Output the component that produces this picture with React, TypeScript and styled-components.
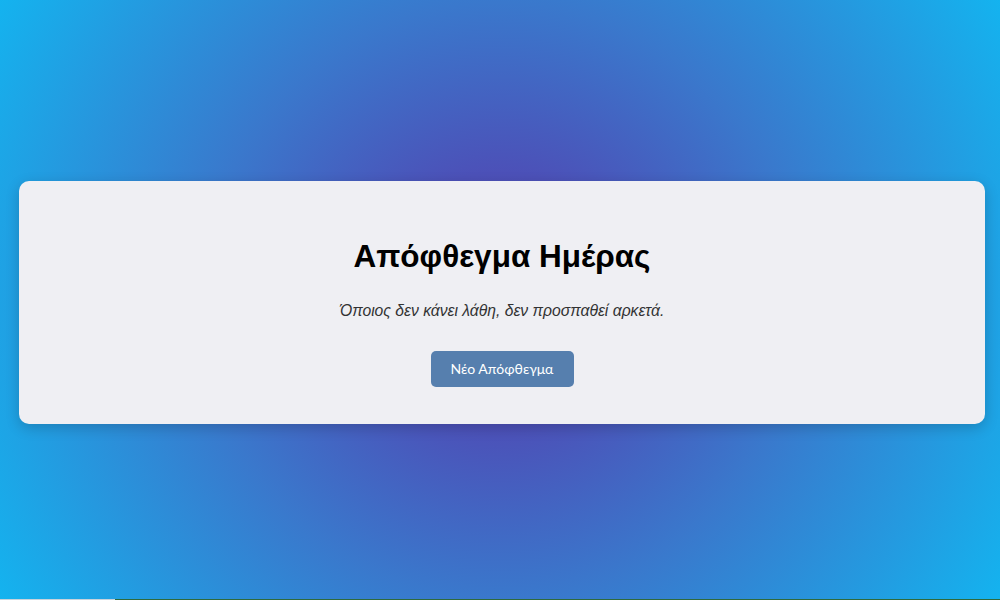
import React from "react";
import styled, { createGlobalStyle } from "styled-components";

const Global = createGlobalStyle`
  html, body { margin: 0; padding: 0; }
  body {
    font-family: "Liberation Sans", Arial, sans-serif;
    overflow: hidden;
  }
`;

const Page = styled.div`
  width: 1000px;
  height: 600px;
  display: flex;
  flex-direction: column;
  background: radial-gradient(
    circle farthest-corner at 50% 50%,
    #5546b6 0%,
    #4c51b8 22%,
    #3a78cc 51%,
    #1da5e6 88%,
    #14b3ef 100%
  );
`;

const Stage = styled.div`
  flex: 1;
  display: flex;
  align-items: center;
  padding: 5px 15px 0 19px;
`;

const Card = styled.div`
  flex: 1;
  background: #efeff3;
  border-radius: 10px;
  box-shadow: 0 4px 14px rgba(0, 0, 0, 0.18);
  padding: 57px 20px 37px;
  display: flex;
  flex-direction: column;
  align-items: center;
  text-align: center;
`;

const Title = styled.h1`
  margin: 0 0 27px;
  font-family: "Liberation Sans", Arial, sans-serif;
  font-size: 31.5px;
  font-weight: 700;
  color: #000;
  line-height: 37px;
`;

const Quote = styled.p`
  margin: 0 0 31px;
  font-family: "Liberation Sans", Arial, sans-serif;
  font-style: italic;
  font-size: 15.7px;
  color: #333;
  line-height: 18px;
`;

const Button = styled.button`
  width: 143px;
  height: 36px;
  border: none;
  border-radius: 5px;
  background: #567fae;
  color: #fff;
  font-family: Lato, "Open Sans", sans-serif;
  font-size: 14px;
  cursor: pointer;
  padding: 0;
`;

const Strip = styled.div`
  height: 1px;
  display: flex;
`;

const StripPart = styled.div<{ $w?: number; $c: string }>`
  ${(p) => (p.$w ? `width: ${p.$w}px;` : "flex: 1;")}
  background: ${(p) => p.$c};
`;

export default function App() {
  return (
    <>
      <Global />
      <Page>
        <Stage>
          <Card>
            <Title>Απόφθεγμα Ημέρας</Title>
            <Quote>Όποιος δεν κάνει λάθη, δεν προσπαθεί αρκετά.</Quote>
            <Button>Νέο Απόφθεγμα</Button>
          </Card>
        </Stage>
        <Strip>
          <StripPart $w={115} $c="#c9d3dc" />
          <StripPart $c="#2f6a3c" />
        </Strip>
      </Page>
    </>
  );
}
